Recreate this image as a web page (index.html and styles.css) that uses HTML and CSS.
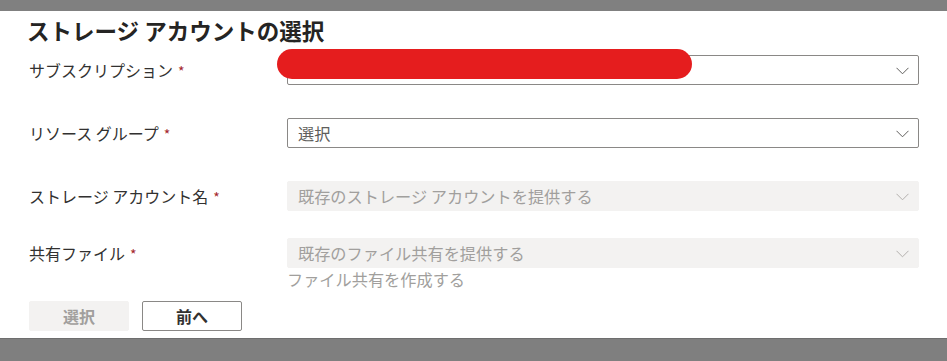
FILE: index.html
```html
<!DOCTYPE html>
<html lang="ja">
<head>
<meta charset="utf-8">
<link rel="stylesheet" href="styles.css">
</head>
<body>
<div class="topbar"></div>
<div class="panel">
  <h1 class="title">ストレージ アカウントの選択</h1>
  <div class="form">
    <div class="row row1">
      <label class="label">サブスクリプション<span class="req">*</span></label>
      <div class="field">
        <div class="dropdown">
          <span class="value"></span>
          <svg class="chev" width="13" height="8" viewBox="0 0 13 8"><polyline points="0.5,0.8 6.5,6.8 12.5,0.8" fill="none" stroke="#605e5c" stroke-width="1"/></svg>
        </div>
        <div class="redact"></div>
      </div>
    </div>
    <div class="row row2">
      <label class="label">リソース グループ<span class="req">*</span></label>
      <div class="field">
        <div class="dropdown">
          <span class="value">選択</span>
          <svg class="chev" width="13" height="8" viewBox="0 0 13 8"><polyline points="0.5,0.8 6.5,6.8 12.5,0.8" fill="none" stroke="#605e5c" stroke-width="1"/></svg>
        </div>
      </div>
    </div>
    <div class="row row3">
      <label class="label">ストレージ アカウント名<span class="req">*</span></label>
      <div class="field">
        <div class="dropdown disabled">
          <span class="value">既存のストレージ アカウントを提供する</span>
          <svg class="chev" width="13" height="8" viewBox="0 0 13 8"><polyline points="0.5,0.8 6.5,6.8 12.5,0.8" fill="none" stroke="#b3b0ad" stroke-width="1"/></svg>
        </div>
      </div>
    </div>
    <div class="row row4">
      <label class="label">共有ファイル<span class="req">*</span></label>
      <div class="field">
        <div class="dropdown disabled">
          <span class="value">既存のファイル共有を提供する</span>
          <svg class="chev" width="13" height="8" viewBox="0 0 13 8"><polyline points="0.5,0.8 6.5,6.8 12.5,0.8" fill="none" stroke="#b3b0ad" stroke-width="1"/></svg>
        </div>
      </div>
    </div>
    <div class="linkrow">
      <span class="link">ファイル共有を作成する</span>
    </div>
  </div>
  <div class="buttons">
    <button class="btn btn-disabled">選択</button>
    <button class="btn btn-default">前へ</button>
  </div>
</div>
<div class="bottombar"></div>
</body>
</html>
```
FILE: styles.css
```css
html, body {
  margin: 0;
  padding: 0;
  background: #808080;
  font-family: "Noto Sans CJK JP", "Noto Sans", sans-serif;
  color: #323130;
}
.topbar {
  height: 11px;
  background: #808080;
}
.panel {
  background: #ffffff;
  height: 327px;
  box-sizing: border-box;
  padding: 0 28px 0 27px;
}
.bottombar {
  height: 23px;
  background: #7f7f7f;
  border-top: 1px solid #6e6e6e;
}
.title {
  margin: 0;
  padding-top: 4px;
  font-size: 22.5px;
  font-weight: 700;
  line-height: 30px;
  color: #252423;
}
.form {
  padding-left: 2px;
}
.row {
  display: grid;
  grid-template-columns: 258px 632px;
  align-items: center;
}
.row1 { margin-top: 10px; }
.row2 { margin-top: 33px; }
.row3 { margin-top: 33px; }
.row4 { margin-top: 27px; }
.label {
  font-size: 16px;
  line-height: 20px;
  color: #323130;
}
.req {
  color: #a4262c;
  margin-left: 5px;
  font-size: 14px;
}
.field {
  position: relative;
}
.dropdown {
  height: 30px;
  box-sizing: border-box;
  border: 1px solid #8a8886;
  border-radius: 2px;
  display: flex;
  align-items: center;
  justify-content: space-between;
  padding: 0 9px 0 10px;
  background: #fff;
}
.dropdown .value {
  font-size: 16.2px;
  line-height: 22px;
  color: #605e5c;
}
.dropdown.disabled {
  border-color: #f3f2f1;
  background: #f3f2f1;
}
.dropdown.disabled .value {
  color: #a19f9d;
}
.chev {
  display: block;
  margin-top: 1px;
}
.redact {
  position: absolute;
  left: -10px;
  top: -6px;
  width: 415px;
  height: 30px;
  border-radius: 15px;
  background: #e51d1e;
}
.linkrow {
  padding-left: 258px;
  margin-top: -1px;
}
.link {
  font-size: 16.2px;
  line-height: 22px;
  color: #a19f9d;
}
.buttons {
  display: flex;
  gap: 13px;
  margin-top: 10px;
  padding-left: 2px;
}
.btn {
  width: 100px;
  height: 30px;
  box-sizing: border-box;
  border-radius: 2px;
  font-family: "Noto Sans CJK JP", "Noto Sans", sans-serif;
  font-size: 16px;
  font-weight: 700;
  padding: 0;
  line-height: 20px;
}
.btn-disabled {
  background: #f3f2f1;
  border: 1px solid #f3f2f1;
  color: #a19f9d;
}
.btn-default {
  background: #fff;
  border: 1px solid #8a8886;
  color: #323130;
}
```
